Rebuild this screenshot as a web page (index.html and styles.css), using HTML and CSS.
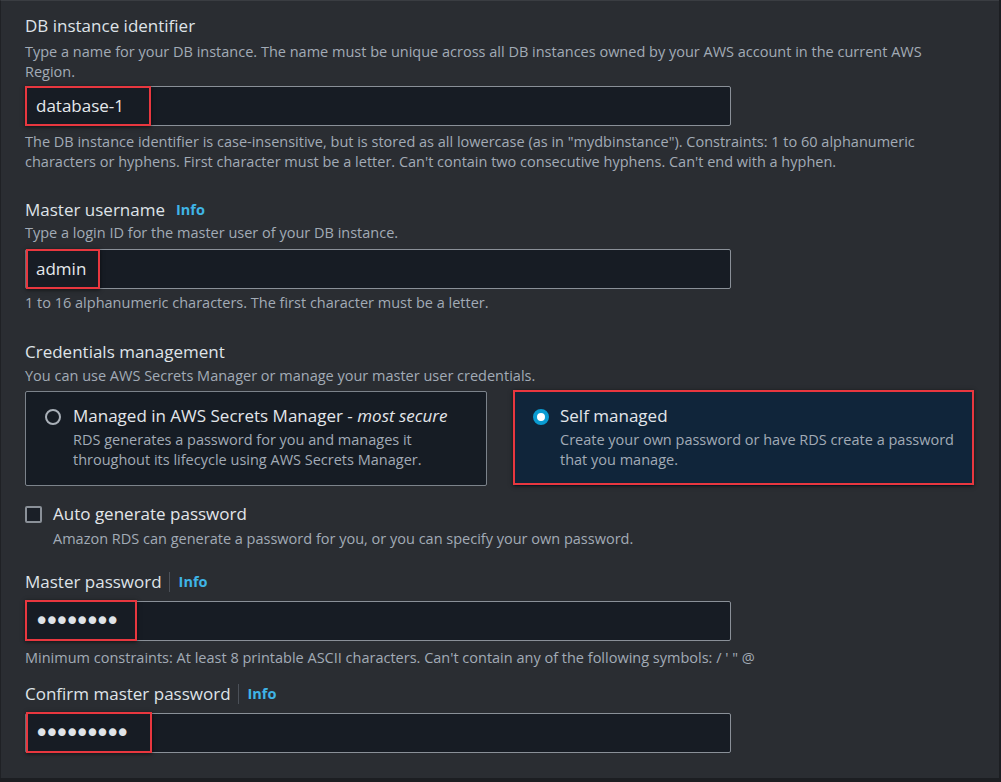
FILE: index.html
```html
<!DOCTYPE html>
<html lang="en">
<head>
<meta charset="utf-8">
<title>DB settings</title>
<link rel="stylesheet" href="styles.css">
</head>
<body>
<div class="frame">
  <section class="field f-id">
    <div class="label">DB instance identifier</div>
    <div class="desc">Type a name for your DB instance. The name must be unique across all DB instances owned by your AWS account in the current AWS Region.</div>
    <div class="input-wrap">
      <div class="input">database-1</div>
      <div class="mark mark-id"></div>
    </div>
    <div class="help">The DB instance identifier is case-insensitive, but is stored as all lowercase (as in "mydbinstance"). Constraints: 1 to 60 alphanumeric characters or hyphens. First character must be a letter. Can't contain two consecutive hyphens. Can't end with a hyphen.</div>
  </section>

  <section class="field f-user">
    <div class="label">Master username <span class="info gap">Info</span></div>
    <div class="desc">Type a login ID for the master user of your DB instance.</div>
    <div class="input-wrap">
      <div class="input">admin</div>
      <div class="mark mark-user"></div>
    </div>
    <div class="help">1 to 16 alphanumeric characters. The first character must be a letter.</div>
  </section>

  <section class="field f-cred">
    <div class="label">Credentials management</div>
    <div class="desc">You can use AWS Secrets Manager or manage your master user credentials.</div>
    <div class="cards">
      <div class="card">
        <span class="radio"></span>
        <div class="card-body">
          <div class="card-title">Managed in AWS Secrets Manager - <em>most secure</em></div>
          <div class="card-desc">RDS generates a password for you and manages it throughout its lifecycle using AWS Secrets Manager.</div>
        </div>
      </div>
      <div class="card selected">
        <span class="radio on"></span>
        <div class="card-body">
          <div class="card-title">Self managed</div>
          <div class="card-desc">Create your own password or have RDS create a password that you manage.</div>
        </div>
        <div class="mark mark-card"></div>
      </div>
    </div>
  </section>

  <section class="check-row">
    <span class="checkbox"></span>
    <div>
      <div class="check-title">Auto generate password</div>
      <div class="desc">Amazon RDS can generate a password for you, or you can specify your own password.</div>
    </div>
  </section>

  <section class="field f-pass">
    <div class="label">Master password <span class="sep"></span><span class="info">Info</span></div>
    <div class="input-wrap">
      <div class="input dots">••••••••</div>
      <div class="mark mark-pass"></div>
    </div>
    <div class="help">Minimum constraints: At least 8 printable ASCII characters. Can't contain any of the following symbols: / ' " @</div>
  </section>

  <section class="field f-confirm">
    <div class="label">Confirm master password <span class="sep"></span><span class="info">Info</span></div>
    <div class="input-wrap">
      <div class="input dots">•••••••••</div>
      <div class="mark mark-confirm"></div>
    </div>
  </section>
</div>
</body>
</html>
```

FILE: styles.css
```css
html, body {
  margin: 0;
  padding: 0;
  background: #1c1e22;
}

body {
  font-family: "Open Sans", "Noto Sans", sans-serif;
  color: #d9dde2;
}

.frame {
  box-sizing: border-box;
  width: 999px;
  height: 778px;
  background: #2a2d32;
  border-top: 1px solid #3a3d42;
  border-left: 1px solid #1f2125;
  padding: 13px 0 0 24px;
}

.field {
  width: 706px;
}

.label {
  font-size: 17px;
  line-height: 24px;
  color: #dfe3e8;
  display: flex;
  align-items: center;
}

.desc, .help {
  font-size: 14.5px;
  line-height: 20px;
  color: #a2abb6;
}

.f-id .desc {
  width: 930px;
  margin-top: 4px;
}

.help {
  margin-top: 6px;
  width: 930px;
  line-height: 19.5px;
}

.info {
  font-size: 14.5px;
  font-weight: 700;
  color: #3fb4e6;
}

.info.gap {
  margin-left: 11px;
}

.sep {
  display: inline-block;
  width: 1px;
  height: 20px;
  background: #4b5058;
  margin: 0 9px 0 7px;
}

.input-wrap {
  position: relative;
  margin-top: 4px;
}

.input {
  box-sizing: border-box;
  height: 40px;
  background: #171c24;
  border: 1px solid #8a9098;
  border-radius: 2px;
  padding: 0 10px;
  font-size: 17px;
  line-height: 38px;
  color: #e6e9ec;
}

.input.dots {
  font-family: "DejaVu Sans", sans-serif;
  font-size: 26px;
  letter-spacing: -5.2px;
  padding-left: 8px;
  color: #dfe3e8;
}

.mark {
  position: absolute;
  box-sizing: border-box;
  border: 2px solid #e8373f;
  box-shadow: 0 1px 4px rgba(0, 0, 0, 0.6);
  pointer-events: none;
}

.mark-id { left: 0; top: 0; width: 126px; height: 40px; }
.mark-user { left: 1px; top: 0; width: 74px; height: 40px; }
.mark-pass { left: 0; top: -1px; width: 112px; height: 41px; }
.mark-confirm { left: 1px; top: -1px; width: 126px; height: 41px; }
.mark-card { left: -2px; top: -2px; right: -2px; bottom: 0; }

.f-user { margin-top: 27px; }
.f-user .desc { margin-top: 1px; }
.f-user .input-wrap { margin-top: 6px; }
.f-user .help { margin-top: 4px; }

.f-cred { margin-top: 27px; width: 960px; }
.f-cred .desc { margin-top: 2px; }

.cards {
  display: flex;
  gap: 27px;
  margin-top: 5px;
}

.card {
  position: relative;
  box-sizing: border-box;
  width: 462px;
  height: 95px;
  background: #161c24;
  border: 1px solid #7c838b;
  border-radius: 2px;
  display: flex;
  gap: 12px;
  padding: 12px 19px 0 19px;
}

.card.selected {
  width: 459px;
  background: #10253a;
  border-color: #10253a;
  padding: 12px 8px 0 18px;
  gap: 11px;
}

.radio {
  box-sizing: border-box;
  flex: none;
  width: 16px;
  height: 16px;
  margin-top: 5px;
  border-radius: 50%;
  border: 2px solid #a9b0b8;
}

.radio.on {
  border: 4.5px solid #0a9bd1;
  background: #ffffff;
}

.card-title {
  font-size: 17px;
  line-height: 24px;
  color: #e3e6ea;
}

.card-desc {
  font-size: 14.5px;
  line-height: 20px;
  color: #a2abb6;
  margin-top: 2px;
}

.check-row {
  display: flex;
  gap: 11px;
  margin-top: 16px;
}

.checkbox {
  box-sizing: border-box;
  flex: none;
  width: 17px;
  height: 17px;
  margin-top: 4px;
  border: 2px solid #8a9098;
  border-radius: 2px;
  background: #1a1f27;
}

.check-title {
  font-size: 17px;
  line-height: 24px;
  color: #e3e6ea;
}

.check-row .desc {
  margin-top: 3px;
}

.f-pass { margin-top: 21px; }
.f-pass .input-wrap { margin-top: 7px; }
.f-pass .help { margin-top: 7px; width: 960px; }
.f-confirm { margin-top: 15px; }
.f-confirm .input-wrap { margin-top: 7px; }
```
